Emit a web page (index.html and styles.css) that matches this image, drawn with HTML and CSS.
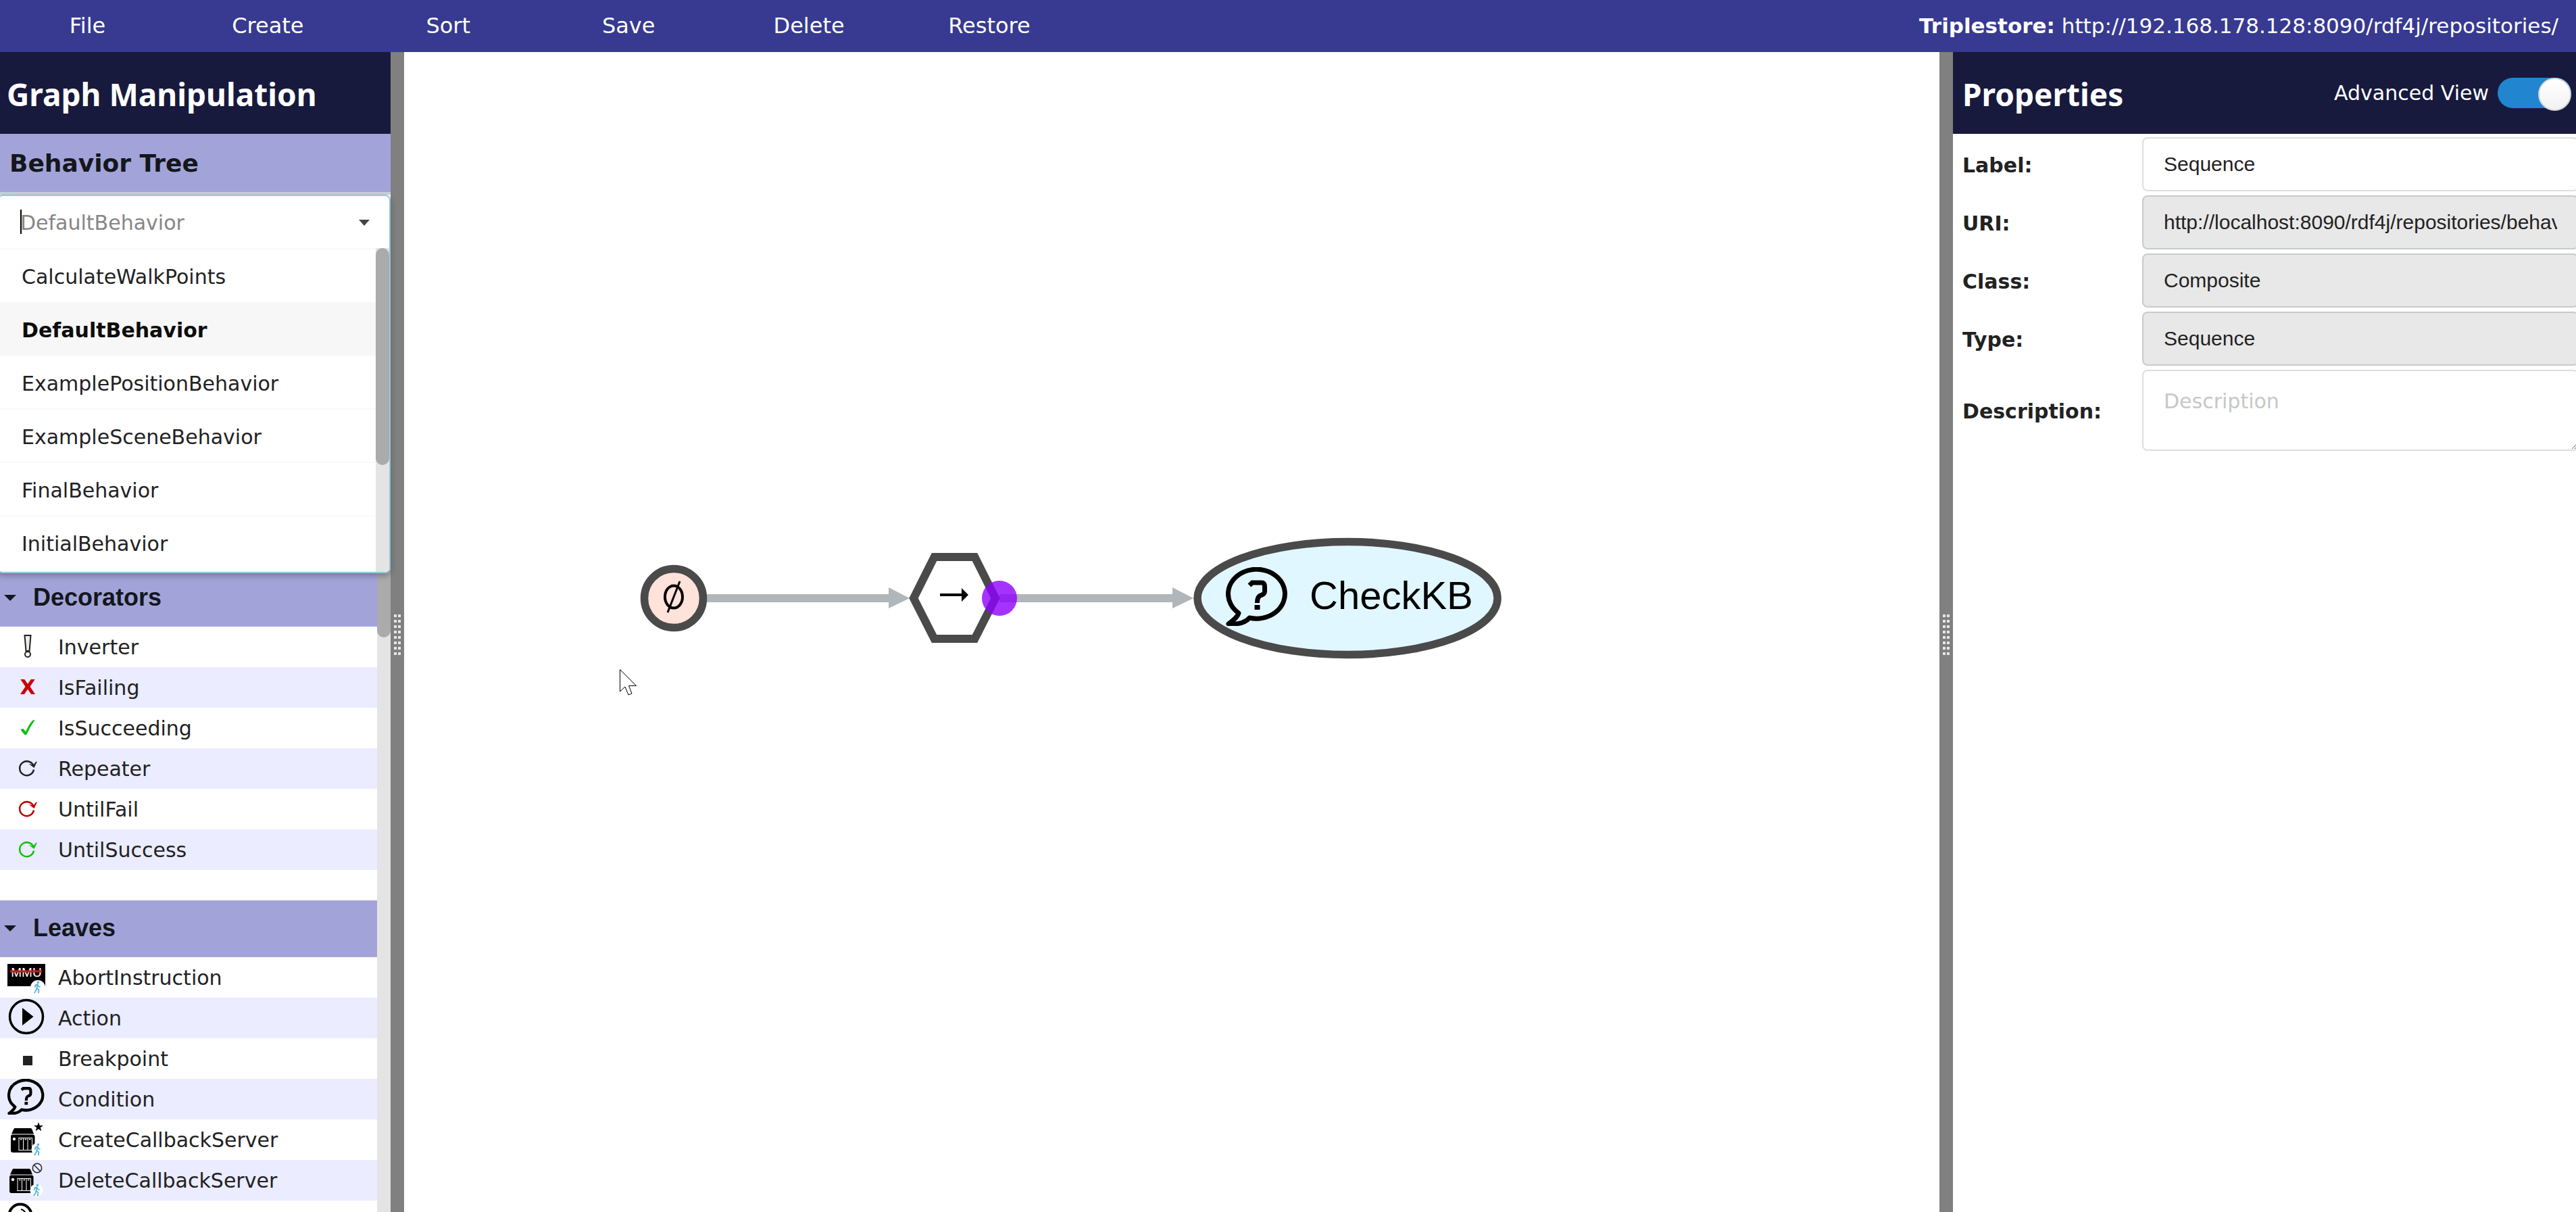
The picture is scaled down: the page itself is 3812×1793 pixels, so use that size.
FILE: index.html
```
<!DOCTYPE html>
<html lang="en">
<head>
<meta charset="utf-8">
<title>Behavior Tree Editor</title>
<link rel="stylesheet" href="styles.css">
</head>
<body>
<svg class="defs" aria-hidden="true">
  <symbol id="bubble" viewBox="0 0 92 87" preserveAspectRatio="none">
    <path d="M35 75A42 36.500 0 1 0 19 68C17 75 10 79 4 84C18 85 29 82 35 75Z" fill="none" stroke="#000" stroke-width="7" stroke-linejoin="round"/>
    <path d="M35 27L39 23H53Q57.500 23 57.500 29V36Q57.500 40 51 42Q46.500 44 46.500 53" fill="none" stroke="#000" stroke-width="7"/>
    <rect x="42.500" y="56" width="8" height="7"/>
  </symbol>
  <symbol id="repeat" viewBox="0 0 85 60">
    <path d="M50 31.500A10.500 10.500 0 1 1 49.500 26" fill="none" stroke="currentColor" stroke-width="2.500"/>
    <path d="M42 22.500L50.500 29L55 19.500L53 20L49 25Z" fill="currentColor"/>
  </symbol>
  <symbol id="walker" viewBox="0 0 12 20">
    <g fill="none" stroke="#5bb8dc" stroke-width="2" stroke-linecap="round" stroke-linejoin="round">
      <path d="M6.500 5.500L5.500 11L8.500 14L8 18.500M5.500 11L4.500 14.500L2 18.500M2.500 9.500L3.500 6.500L6.500 5.500L8 8.500L10 9.500" />
    </g>
    <circle cx="7.500" cy="2.500" r="1.900" fill="#5bb8dc"/>
  </symbol>
  <symbol id="server" viewBox="0 0 36 37">
    <path d="M6 0H29Q31 0 31.500 2L34 8.500H1L4 2Q4.500 0 6 0Z"/>
    <rect x="0" y="9.500" width="35.500" height="26.500" rx="3"/>
    <circle cx="5" cy="16" r="2.200" fill="#fff"/>
    <path d="M11.500 14.500H32M11.500 32.500H32M12 14V33M18.500 14V33M25 14V33M31.500 14V33" fill="none" stroke="#fff" stroke-width="1"/>
    <path d="M14 16.500H16.500M20.500 16.500H23M27 16.500H29.500" stroke="#fff" stroke-width="1.500"/>
  </symbol>
</svg>

<header class="topbar">
  <nav class="menu">
    <button type="button">File</button>
    <button type="button">Create</button>
    <button type="button">Sort</button>
    <button type="button">Save</button>
    <button type="button">Delete</button>
    <button type="button">Restore</button>
  </nav>
  <p class="store"><strong>Triplestore:</strong> http://192.168.178.128:8090/rdf4j/repositories/</p>
</header>

<div class="workspace">
  <aside class="panel sidebar">
    <div class="panel-head"><h1>Graph Manipulation</h1></div>
    <h2 class="section-title"><label for="tree">Behavior Tree</label></h2>
    <div class="picker">
      <div class="picker-field">
        <input id="tree" type="text" role="combobox" aria-expanded="true" aria-controls="tree-list" placeholder="DefaultBehavior">
        <span class="caret"></span>
        <svg class="picker-arrow" viewBox="0 0 16 9" aria-hidden="true"><path d="M0 0H16L8 9Z"/></svg>
      </div>
      <div class="picker-menu">
        <ul id="tree-list" role="listbox">
          <li role="option">CalculateWalkPoints</li>
          <li role="option" aria-selected="true" class="selected">DefaultBehavior</li>
          <li role="option">ExamplePositionBehavior</li>
          <li role="option">ExampleSceneBehavior</li>
          <li role="option">FinalBehavior</li>
          <li role="option">InitialBehavior</li>
        </ul>
        <div class="track"><div class="thumb thumb-list"></div></div>
      </div>
    </div>
    <div class="palette">
      <div class="palette-body">
        <section>
          <h2 class="group"><svg viewBox="0 0 18 9" aria-hidden="true"><path d="M0 0H18L9 9Z"/></svg>Decorators</h2>
          <ul class="items">
            <li><svg viewBox="0 0 85 60"><path d="M36.500 13H45.500L43.500 36H38.500Z" fill="#ecece8" stroke="#222" stroke-width="2"/><circle cx="41" cy="41" r="4" fill="#fff" stroke="#222" stroke-width="2"/></svg>Inverter</li>
            <li><svg viewBox="0 0 85 60"><text x="41" y="40" class="cross">X</text></svg>IsFailing</li>
            <li><svg viewBox="0 0 85 60"><path d="M30.500 32.500Q33 30 35 31.500L38 35.500Q43 24 48.500 18.500Q50 18 51.700 18Q44 29 39.500 39.500Q38 40.500 36.500 40Q33.500 37 30.500 32.500Z" fill="#10c010"/></svg>IsSucceeding</li>
            <li><svg class="dark"><use href="#repeat"/></svg>Repeater</li>
            <li><svg class="red"><use href="#repeat"/></svg>UntilFail</li>
            <li><svg class="green"><use href="#repeat"/></svg>UntilSuccess</li>
          </ul>
        </section>
        <section>
          <h2 class="group"><svg viewBox="0 0 18 9" aria-hidden="true"><path d="M0 0H18L9 9Z"/></svg>Leaves</h2>
          <ul class="items">
            <li><svg viewBox="0 0 85 60"><rect x="11" y="10" width="56" height="33"/><text x="39" y="29" class="mmu">MMU</text><path d="M15 21H62" stroke="#d01812" stroke-width="3"/><circle cx="56" cy="45" r="11" fill="#fff"/><use href="#walker" x="49" y="35" width="12" height="19"/></svg>AbortInstruction</li>
            <li><svg viewBox="0 0 85 60"><circle cx="39" cy="28" r="24.500" fill="none" stroke="#000" stroke-width="3.500"/><path d="M33 15V41L49.500 28Z"/></svg>Action</li>
            <li><svg viewBox="0 0 85 60"><rect x="34" y="26" width="14" height="14" fill="#222"/></svg>Breakpoint</li>
            <li><svg viewBox="0 0 85 60"><use href="#bubble" x="11" y="0" width="55" height="53"/></svg>Condition</li>
            <li><svg viewBox="0 0 85 60"><use href="#server" x="16" y="13" width="36" height="37"/><path d="M57 4L58.700 9H64L59.800 12L61.400 17.300L57 14.200L52.600 17.300L54.200 12L50 9H55.300Z"/><circle cx="56" cy="44" r="9.500" fill="#fff"/><use href="#walker" x="49" y="35" width="12" height="19"/></svg>CreateCallbackServer</li>
            <li><svg viewBox="0 0 85 60"><use href="#server" x="14" y="13" width="36" height="37"/><g fill="none" stroke="#222" stroke-width="1.500"><circle cx="55" cy="12" r="6.700"/><path d="M50.500 7.500L59.500 16.500"/></g><circle cx="54" cy="45" r="9.500" fill="#fff"/><use href="#walker" x="48" y="35" width="12" height="19"/></svg>DeleteCallbackServer</li>
            <li><svg viewBox="0 0 85 60"><circle cx="30" cy="22" r="16.500" fill="none" stroke="#000" stroke-width="4"/><path d="M31 13Q36 14 38 19" fill="none" stroke="#000" stroke-width="2"/></svg></li>
          </ul>
        </section>
      </div>
      <div class="track"><div class="thumb thumb-palette"></div></div>
    </div>
  </aside>

  <div class="gutter"><span class="grip"></span></div>

  <main class="canvas">
    <svg class="graph" viewBox="598 77 2272 1716" role="img" aria-label="Behavior tree graph">
      <g fill="#b1b6ba">
        <rect x="1046" y="879" width="270" height="12"/>
        <path d="M1315 869L1346 885L1315 900Z"/>
        <rect x="1479" y="879" width="257" height="12"/>
        <path d="M1735 869L1766 885L1735 900Z"/>
      </g>
      <circle cx="997" cy="885" r="43.500" fill="#ffe2da" stroke="#4a4a4a" stroke-width="11.500"/>
      <g fill="none" stroke="#000">
        <ellipse cx="997" cy="883" rx="13" ry="16.500" stroke-width="4"/>
        <path d="M988 906L1006 860" stroke-width="3"/>
      </g>
      <path d="M1352 885L1382.500 824H1442.500L1473 885L1442.500 945H1382.500Z" fill="#fff" stroke="#4a4a4a" stroke-width="12"/>
      <path d="M1391 878H1423V870L1433 880L1423 890V882H1391Z"/>
      <ellipse cx="1994" cy="885" rx="222" ry="83.500" fill="#e1f7ff" stroke="#4a4a4a" stroke-width="11.500"/>
      <use href="#bubble" x="1814" y="839" width="92" height="87"/>
      <text x="1938" y="901" class="node-label">CheckKB</text>
      <circle cx="1479" cy="885" r="26" fill="#8e00ff" fill-opacity=".8"/>
      <path d="M917.500 990.500V1023L925 1016L930 1028L935 1026L930.500 1014.500H941.500Z" fill="#fff" stroke="#000" stroke-width="1"/>
    </svg>
  </main>

  <div class="gutter"><span class="grip"></span></div>

  <aside class="panel properties">
    <div class="panel-head">
      <h1>Properties</h1>
      <label class="switch">Advanced View <input type="checkbox" role="switch" checked></label>
    </div>
    <form class="fields">
      <label for="f-label">Label:</label>
      <input id="f-label" type="text" value="Sequence">
      <label for="f-uri">URI:</label>
      <input id="f-uri" type="text" value="http://localhost:8090/rdf4j/repositories/behavior" readonly>
      <label for="f-class">Class:</label>
      <input id="f-class" type="text" value="Composite" readonly>
      <label for="f-type">Type:</label>
      <input id="f-type" type="text" value="Sequence" readonly>
      <label for="f-desc">Description:</label>
      <textarea id="f-desc" placeholder="Description"></textarea>
    </form>
  </aside>
</div>
</body>
</html>
```
FILE: styles.css
```
* { box-sizing: border-box; }

body {
  margin: 0;
  height: 100vh;
  display: flex;
  flex-direction: column;
  overflow: hidden;
  background: #fff;
  color: #222;
  font: 30px "DejaVu Sans", Verdana, sans-serif;
}

h1, h2, p, ul { margin: 0; padding: 0; }
ul { list-style: none; }
.defs { position: absolute; width: 0; height: 0; }

/* Top bar */
.topbar {
  flex: 0 0 77px;
  display: flex;
  align-items: center;
  justify-content: space-between;
  padding: 0 26px 2px 0;
  background: #373a90;
  color: #fff;
}
.menu { flex: 0 0 42.3%; display: flex; margin-left: -4px; }
.menu button {
  flex: 1;
  padding: 0;
  border: 0;
  background: none;
  color: inherit;
  font: inherit;
  font-size: 32px;
}
.store { font-size: 31px; white-space: nowrap; }

.workspace { flex: 1; min-height: 0; display: flex; }
.panel { display: flex; flex-direction: column; min-height: 0; }
.panel-head {
  flex: 0 0 121px;
  display: flex;
  align-items: center;
  justify-content: space-between;
  background: #171a3d;
  color: #fff;
}
.panel-head h1 {
  padding-top: 2px;
  font: bold 46px "Noto Sans", "Open Sans", sans-serif;
}

/* Left panel */
.sidebar { flex: 0 0 578px; }
.sidebar .panel-head { padding-left: 10px; }
.section-title {
  flex: 0 0 90px;
  display: flex;
  align-items: center;
  padding-left: 14px;
  border-bottom: 4px solid #cbcfdb;
  background: #a2a4d9;
  color: #14171c;
  font-size: 36px;
}
.picker {
  position: relative;
  z-index: 1;
  margin-left: -4px;
  border: 2px solid #96c8da;
  border-radius: 8px;
  background: #fff;
  box-shadow: 0 4px 8px rgba(34, 36, 60, .35);
}
.picker-field { position: relative; height: 77px; }
.picker-field input {
  width: 100%;
  height: 100%;
  padding: 2px 60px 0 32px;
  border: 0;
  border-radius: 8px;
  outline: 0;
  background: none;
  color: #222;
  font: inherit;
}
.picker-field input::placeholder { color: #868686; opacity: 1; }
.caret {
  position: absolute;
  left: 32px;
  top: 20px;
  width: 2px;
  height: 36px;
  background: #000;
}
.picker-arrow {
  position: absolute;
  right: 29px;
  top: 35px;
  width: 16px;
  height: 9px;
  fill: #444;
}
.picker-menu { display: flex; height: 479px; border-radius: 0 0 8px 8px; overflow: hidden; }
.picker-menu ul { flex: 1; border-bottom: 2px solid #fafafa; }
.picker-menu li {
  height: 79px;
  display: flex;
  align-items: center;
  padding: 4px 0 0 34px;
  border-top: 2px solid #fafafa;
}
.picker-menu .selected { background: #f7f7f7; color: #0d0d0d; font-weight: bold; }

.track { flex: 0 0 20px; background: #e4e4e4; }
.thumb { background: #ababab; border-radius: 10px; }
.thumb-list { height: 67%; }
.thumb-palette { height: 100px; border-radius: 0 0 10px 10px; }

.palette { flex: 1; min-height: 0; display: flex; margin-top: -5px; overflow: hidden; }
.palette-body { flex: 1; display: flex; flex-direction: column; gap: 45px; }
.group {
  height: 84px;
  display: flex;
  align-items: center;
  gap: 25px;
  padding: 0 0 2px 6px;
  background: #a2a4d9;
  color: #14171c;
  font: bold 36px "Liberation Sans", Arial, sans-serif;
}
.group svg { width: 18px; height: 9px; fill: #14171c; }
.items li { height: 60px; display: flex; gap: 1px; line-height: 62px; }
.items li:nth-child(even) { background: #ebecff; }
.items svg { flex: 0 0 85px; width: 85px; height: 60px; }
.cross { fill: #c80000; font: bold 30px "DejaVu Sans", sans-serif; text-anchor: middle; }
.mmu { fill: #fff; font: 19px "Liberation Sans", Arial, sans-serif; text-anchor: middle; }
.dark { color: #222; }
.red { color: #c00000; }
.green { color: #10c010; }

/* Resizable pane dividers */
.gutter {
  flex: 0 0 20px;
  display: flex;
  align-items: center;
  justify-content: center;
  padding-top: 8px;
  background: #808080;
}
.grip {
  width: 10px;
  height: 60px;
  background:
    linear-gradient(90deg, transparent 4px, #808080 4px, #808080 6px, transparent 6px),
    repeating-linear-gradient(#e6e6e6 0, #e6e6e6 4px, #808080 4px, #808080 8px);
}

/* Graph */
.canvas { flex: 1; min-width: 0; min-height: 0; }
.graph { display: block; width: 100%; height: 100%; }
.node-label { font: 58px "Liberation Sans", Arial, sans-serif; }

/* Right panel */
.properties { flex: 0 0 922px; }
.properties .panel-head { padding: 0 7px 0 14px; }
.switch { display: flex; align-items: center; gap: 13px; }
.switch input {
  appearance: none;
  width: 109px;
  height: 45px;
  margin: 0;
  display: flex;
  justify-content: flex-end;
  border-radius: 23px;
  background: #2185d0;
}
.switch input::before {
  content: "";
  width: 45px;
  height: 45px;
  border: 2px solid #d4d4d5;
  border-radius: 50%;
  background: linear-gradient(#fff, #f2f2f2);
}
.fields {
  display: grid;
  grid-template-columns: 266px 1fr;
  row-gap: 6px;
  align-items: center;
  margin: 5px -4px 0 0;
  padding-left: 14px;
}
.fields label { padding-top: 2px; font-weight: bold; }
.fields input,
.fields textarea {
  width: 100%;
  height: 80px;
  padding: 0 30px;
  border: 2px solid #dededf;
  border-radius: 8px;
  outline: 0;
  background: #fff;
  color: #222;
  font: 30px "Liberation Sans", Arial, sans-serif;
}
.fields input:read-only { border-color: #c9cacb; background: #e8e8e8; }
.fields textarea {
  display: block;
  height: 120px;
  padding-top: 27px;
  font-family: "DejaVu Sans", Verdana, sans-serif;
}
.fields textarea::placeholder { color: #c7c7c7; opacity: 1; }
```
